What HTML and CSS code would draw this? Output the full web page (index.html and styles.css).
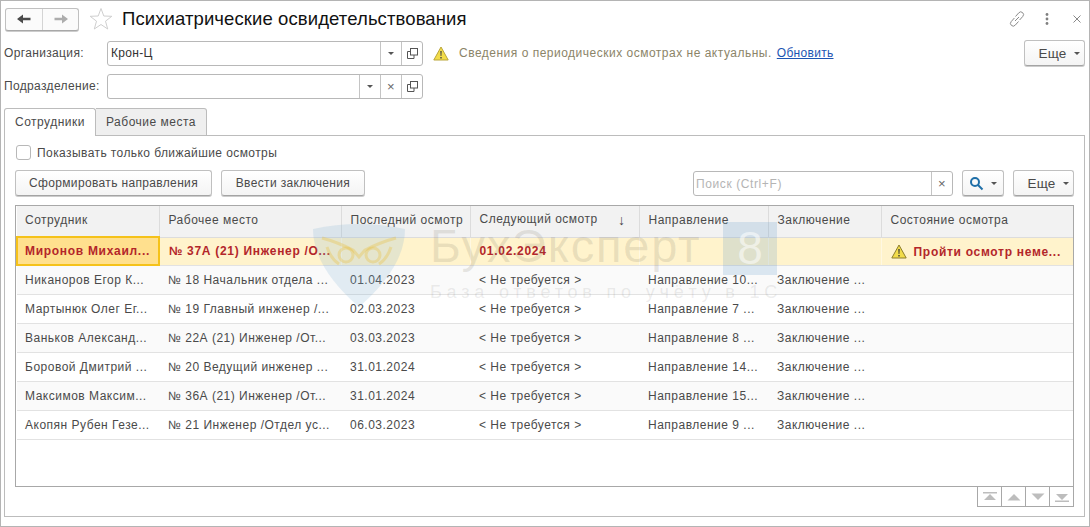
FILE: index.html
```html
<!DOCTYPE html>
<html lang="ru">

<head>
    <meta charset="UTF-8">
    <meta name="viewport" content="width=device-width, initial-scale=1.0">
    <title>Психиатрические освидетельствования</title>
    <link rel="stylesheet" href="styles.css">
</head>

<body>
    <div class="window">
        <header class="title-bar">
            <div class="nav-group">
                <button class="nav-btn">
                    <svg width="16" height="12" viewBox="0 0 16 12"><path d="M1 6 L7 1.5 V4.8 H14.5 V7.2 H7 V10.5 Z" fill="#4a4a4a"/></svg>
                </button>
                <button class="nav-btn">
                    <svg width="16" height="12" viewBox="0 0 16 12"><path d="M15 6 L9 1.5 V4.8 H1.5 V7.2 H9 V10.5 Z" fill="#adadad"/></svg>
                </button>
            </div>
            <svg class="star" width="24" height="24" viewBox="0 0 24 24"><path d="M12 1.5 L14.8 9 L22.8 9.3 L16.5 14.2 L18.7 22 L12 17.5 L5.3 22 L7.5 14.2 L1.2 9.3 L9.2 9 Z" fill="#fff" stroke="#cfcfcf"/></svg>
            <h1 class="title">Психиатрические освидетельствования</h1>
            <div class="title-tools">
                <svg class="tool-link" width="18" height="18" viewBox="0 0 18 18" fill="none" stroke="#8a8a8a" stroke-width="1"><path d="M7.5 6.5 L10.8 2.8 a2.6 2.6 0 0 1 4 3.6 L11.6 10"/><path d="M10.5 11.5 L7.2 15.2 a2.6 2.6 0 0 1 -4 -3.6 L6.4 8"/><path d="M7 11 L11 7"/></svg>
                <svg width="6" height="14" viewBox="0 0 6 14"><circle cx="3" cy="2.5" r="1.4" fill="#808080"/><circle cx="3" cy="7" r="1.4" fill="#808080"/><circle cx="3" cy="11.5" r="1.4" fill="#808080"/></svg>
                <svg width="10" height="10" viewBox="0 0 10 10"><path d="M1.5 1.5 L8.5 8.5 M8.5 1.5 L1.5 8.5" stroke="#888" stroke-width="1"/></svg>
            </div>
        </header>

        <div class="form-row form-row-first">
            <label class="field-label">Организация:</label>
            <div class="field">
                <div class="field-value">Крон-Ц</div>
                <span class="field-btn"><i class="caret"></i></span>
                <span class="field-btn">
                    <svg width="11" height="11" viewBox="0 0 11 11" fill="none" stroke="#555"><rect x="3.5" y="0.5" width="7" height="6.5"/><path d="M3.5 3.5 H0.5 V10.5 H7 V7"/></svg>
                </span>
            </div>
            <svg class="warn" width="16" height="15" viewBox="0 0 16 15"><path d="M8 1 L15.2 14 H0.8 Z" fill="#f2dc4a" stroke="#b9a53a"/><path d="M7.3 5 H8.7 L8.4 10 H7.6 Z M7.3 11 H8.7 V12.4 H7.3 Z" fill="#444"/></svg>
            <span class="notice">Сведения о периодических осмотрах не актуальны.</span>
            <a class="link" href="#">Обновить</a>
            <button class="btn btn-more-top">Еще<i class="caret"></i></button>
        </div>

        <div class="form-row form-row-second">
            <label class="field-label">Подразделение:</label>
            <div class="field">
                <div class="field-value"></div>
                <span class="field-btn"><i class="caret"></i></span>
                <span class="field-btn cross">×</span>
                <span class="field-btn">
                    <svg width="11" height="11" viewBox="0 0 11 11" fill="none" stroke="#555"><rect x="3.5" y="0.5" width="7" height="6.5"/><path d="M3.5 3.5 H0.5 V10.5 H7 V7"/></svg>
                </span>
            </div>
        </div>

        <div class="tabs">
            <div class="tab tab-active">Сотрудники</div>
            <div class="tab">Рабочие места</div>
        </div>

        <section class="panel">
            <div class="check-row">
                <span class="checkbox"></span>
                <span>Показывать только ближайшие осмотры</span>
            </div>

            <div class="toolbar">
                <button class="btn btn-make">Сформировать направления</button>
                <button class="btn btn-enter">Ввести заключения</button>
                <div class="search">
                    <div class="search-input">Поиск (Ctrl+F)</div>
                    <span class="field-btn cross">×</span>
                </div>
                <button class="btn btn-find">
                    <svg width="15" height="15" viewBox="0 0 15 15" fill="none" stroke="#1f6fa8" stroke-width="2"><circle cx="6" cy="6" r="4"/><path d="M9 9 L13.5 13.5"/></svg>
                    <i class="caret"></i>
                </button>
                <button class="btn btn-more">Еще<i class="caret"></i></button>
            </div>

            <div class="grid-wrap">
                <table class="grid">
                    <colgroup>
                        <col class="col-1"><col class="col-2"><col class="col-3"><col class="col-4">
                        <col class="col-5"><col class="col-6"><col class="col-7">
                    </colgroup>
                    <thead>
                        <tr>
                            <th>Сотрудник</th>
                            <th>Рабочее место</th>
                            <th>Последний осмотр</th>
                            <th class="sorted">Следующий осмотр<span class="sort-arrow">↓</span></th>
                            <th>Направление</th>
                            <th>Заключение</th>
                            <th>Состояние осмотра</th>
                        </tr>
                    </thead>
                    <tbody>
                        <tr class="row-alert">
                            <td class="cell-current">Миронов Михаил...</td>
                            <td>№ 37А (21) Инженер /О...</td>
                            <td></td>
                            <td>01.02.2024</td>
                            <td></td>
                            <td></td>
                            <td class="cell-state">
                                <svg width="16" height="15" viewBox="0 0 16 15"><path d="M8 1 L15.2 14 H0.8 Z" fill="#f2dc4a" stroke="#8c7d2c"/><path d="M7.3 5 H8.7 L8.4 10 H7.6 Z M7.3 11 H8.7 V12.4 H7.3 Z" fill="#333"/></svg>
                                Пройти осмотр неме...
                            </td>
                        </tr>
                        <tr>
                            <td>Никаноров Егор К...</td>
                            <td>№ 18 Начальник отдела ...</td>
                            <td>01.04.2023</td>
                            <td>&lt; Не требуется &gt;</td>
                            <td>Направление 10...</td>
                            <td>Заключение ...</td>
                            <td></td>
                        </tr>
                        <tr>
                            <td>Мартынюк Олег Ег...</td>
                            <td>№ 19 Главный инженер /...</td>
                            <td>02.03.2023</td>
                            <td>&lt; Не требуется &gt;</td>
                            <td>Направление 7 ...</td>
                            <td>Заключение ...</td>
                            <td></td>
                        </tr>
                        <tr>
                            <td>Ваньков Александ...</td>
                            <td>№ 22А (21) Инженер /От...</td>
                            <td>03.03.2023</td>
                            <td>&lt; Не требуется &gt;</td>
                            <td>Направление 8 ...</td>
                            <td>Заключение ...</td>
                            <td></td>
                        </tr>
                        <tr>
                            <td>Боровой Дмитрий ...</td>
                            <td>№ 20 Ведущий инженер ...</td>
                            <td>31.01.2024</td>
                            <td>&lt; Не требуется &gt;</td>
                            <td>Направление 14...</td>
                            <td>Заключение ...</td>
                            <td></td>
                        </tr>
                        <tr>
                            <td>Максимов Максим...</td>
                            <td>№ 36А (21) Инженер /От...</td>
                            <td>31.01.2024</td>
                            <td>&lt; Не требуется &gt;</td>
                            <td>Направление 15...</td>
                            <td>Заключение ...</td>
                            <td></td>
                        </tr>
                        <tr>
                            <td>Акопян Рубен Гезе...</td>
                            <td>№ 21 Инженер /Отдел ус...</td>
                            <td>06.03.2023</td>
                            <td>&lt; Не требуется &gt;</td>
                            <td>Направление 9 ...</td>
                            <td>Заключение ...</td>
                            <td></td>
                        </tr>
                    </tbody>
                </table>
            </div>

            <div class="pager">
                <span class="pager-btn"><svg width="14" height="10" viewBox="0 0 14 10"><path d="M0 0 H14 V1.5 H0 Z M7 2 L13 8 H1 Z" fill="#bdbdbd"/></svg></span>
                <span class="pager-btn"><svg width="14" height="8" viewBox="0 0 14 8"><path d="M7 1 L13.5 7.5 H0.5 Z" fill="#bdbdbd"/></svg></span>
                <span class="pager-btn"><svg width="14" height="8" viewBox="0 0 14 8"><path d="M0.5 0.5 H13.5 L7 7 Z" fill="#bdbdbd"/></svg></span>
                <span class="pager-btn"><svg width="14" height="10" viewBox="0 0 14 10"><path d="M1 2 H13 L7 8 Z M0 8.5 H14 V10 H0 Z" fill="#bdbdbd"/></svg></span>
            </div>
        </section>

        <!-- watermark over the grid -->
        <div class="watermark">
            <svg class="wm-shield" width="93" height="84" viewBox="0 0 93 84">
                <path d="M0 6 Q46 -4 92 6 Q92 44 46 84 Q0 44 0 6 Z" fill="#7fb0d4" fill-opacity="0.2"/>
                <g fill="none" stroke="#e8b820" stroke-opacity="0.28" stroke-width="3">
                    <circle cx="33" cy="32" r="7"/>
                    <circle cx="60" cy="32" r="7"/>
                    <path d="M9 15 Q24 19 40 27 L46 34 L52 27 Q68 19 83 15"/>
                    <path d="M14 24 Q18 36 26 41 M78 24 Q74 36 66 41"/>
                </g>
            </svg>
            <div class="wm-text">
                <div class="wm-name">БухЭксперт</div>
                <div class="wm-sub">База ответов по учёту в 1С</div>
            </div>
            <div class="wm-eight">8</div>
        </div>
    </div>
</body>

</html>
```

FILE: styles.css
```css
* {
    box-sizing: border-box;
}

html,
body {
    margin: 0;
    height: 100%;
    background: #fff;
}

body {
    font-family: "Liberation Sans", Arial, sans-serif;
    font-size: 12px;
    letter-spacing: 0.5px;
    color: #4a4a4a;
}

.window {
    position: relative;
    height: 527px;
    border: 1px solid #b4b4b4;
    overflow: hidden;
}

/* title */
.title-bar {
    display: flex;
    align-items: center;
    height: 36px;
    padding: 0 7px 0 4px;
}

.nav-group {
    display: flex;
    height: 23px;
    border: 1px solid #c0c0c0;
    border-bottom-color: #a8a8a8;
    border-radius: 3px;
    box-shadow: 0 1px 0 #ccc;
    background: #fbfbfb;
}

.nav-btn {
    display: flex;
    align-items: center;
    justify-content: center;
    width: 36px;
    padding: 0;
    border: 0;
    background: none;
}

.nav-btn + .nav-btn {
    border-left: 1px solid #d4d4d4;
}

.star {
    margin-left: 10px;
}

.title {
    margin: 0 0 0 9px;
    font-size: 18.5px;
    font-weight: normal;
    letter-spacing: 0.1px;
    color: #111;
}

.title-tools {
    display: flex;
    align-items: center;
    gap: 22px;
    margin-left: auto;
}

.tool-link {
    margin-right: -4px;
}

/* form */
.form-row {
    display: flex;
    align-items: center;
    padding-left: 3px;
}

.form-row-first {
    height: 26px;
    margin-top: 3px;
}

.form-row-second {
    height: 24px;
    margin-top: 8px;
}

.field-label {
    width: 103px;
    letter-spacing: 0.35px;
}

.field {
    display: flex;
    width: 316px;
    height: 25px;
    border: 1px solid #b8b8b8;
    border-radius: 3px;
    background: #fff;
}

.field-value {
    flex: 1;
    padding: 4px 3px;
    letter-spacing: 0.3px;
    color: #333;
}

.field-btn {
    display: flex;
    align-items: center;
    justify-content: center;
    width: 21px;
    border-left: 1px solid #c4c4c4;
    color: #666;
}

.cross {
    font-size: 13px;
}

.caret {
    display: inline-block;
    width: 0;
    height: 0;
    border-left: 3px solid transparent;
    border-right: 3px solid transparent;
    border-top: 3px solid #555;
}

.warn {
    margin-left: 10px;
}

.notice {
    margin-left: 10px;
    color: #8b8468;
}

.link {
    margin-left: 5px;
    letter-spacing: 0.3px;
    color: #1c55b3;
}

.btn {
    height: 26px;
    padding: 0;
    border: 1px solid #c0c0c0;
    border-bottom-color: #a4a4a4;
    border-radius: 3px;
    background: linear-gradient(#fff, #f4f4f4);
    box-shadow: 0 1px 0 #ccc;
    font-family: inherit;
    font-size: 12px;
    letter-spacing: 0.35px;
    color: #4a4a4a;
}

.btn .caret {
    margin-left: 7px;
    vertical-align: middle;
}

.btn-more-top,
.btn-more {
    padding-left: 9px;
    font-size: 13.5px;
    letter-spacing: 0.2px;
}

.btn-more-top {
    width: 61px;
    margin-left: auto;
    margin-right: 4px;
}

/* tabs */
.tabs {
    display: flex;
    height: 28px;
    margin: 10px 0 0 3px;
}

.tab {
    width: 111px;
    padding-top: 6px;
    text-align: center;
    border: 1px solid #bcbcbc;
    border-left: 0;
    border-radius: 0 3px 0 0;
    background: #efefef;
}

.tab-active {
    position: relative;
    z-index: 1;
    width: 92px;
    height: 28px;
    border-left: 1px solid #bcbcbc;
    border-bottom: 0;
    border-radius: 3px 3px 0 0;
    background: #fff;
}

.panel {
    display: flex;
    flex-direction: column;
    height: 382px;
    margin: -1px 4px 0 3px;
    padding: 9px 10px 0 10px;
    border: 1px solid #bcbcbc;
}

.check-row {
    display: flex;
    align-items: center;
    gap: 6px;
    height: 15px;
    letter-spacing: 0.42px;
}

.checkbox {
    width: 15px;
    height: 15px;
    margin-left: 1px;
    border: 1px solid #b8b8b8;
    border-radius: 3px;
}

.toolbar {
    display: flex;
    align-items: center;
    height: 26px;
    margin-top: 10px;
}

.btn-make {
    width: 197px;
}

.btn-enter {
    width: 144px;
    margin-left: 9px;
}

.search {
    display: flex;
    width: 260px;
    height: 25px;
    margin-left: auto;
    border: 1px solid #b8b8b8;
    border-radius: 3px;
}

.search-input {
    flex: 1;
    padding: 5px 2px;
    letter-spacing: 0.6px;
    color: #b4b4b4;
}

.btn-find {
    display: flex;
    align-items: center;
    justify-content: center;
    width: 42px;
    margin-left: 9px;
}

.btn-more {
    width: 61px;
    margin-left: 9px;
}

/* grid */
.grid-wrap {
    height: 282px;
    margin-top: 9px;
    border: 1px solid #a8a8a8;
    overflow: hidden;
}

.grid {
    width: 100%;
    table-layout: fixed;
    border-collapse: collapse;
}

.col-1 { width: 142px; }
.col-2 { width: 182px; }
.col-3 { width: 129px; }
.col-4 { width: 169px; }
.col-5 { width: 129px; }
.col-6 { width: 113px; }

.grid th {
    height: 31px;
    padding: 0 8px 2px 9px;
    font-weight: normal;
    text-align: left;
    white-space: nowrap;
    background: #f2f2f2;
    border-right: 1px solid #dcdcdc;
    border-bottom: 1px solid #dcdcdc;
}

.grid th:first-child,
.grid td:first-child {
    padding-left: 8px;
}

.grid th:last-child {
    border-right: 0;
}

.sort-arrow {
    float: right;
    margin-right: 5px;
    font-size: 14px;
    color: #444;
}

.grid td {
    height: 29px;
    padding: 0 8px 0 9px;
    white-space: nowrap;
    overflow: hidden;
    border-bottom: 1px solid #e2e2e2;
}

.grid tbody tr:nth-child(even) {
    background: #fafafa;
}

.grid .row-alert td {
    height: 28px;
    font-weight: bold;
    letter-spacing: 0.7px;
    color: #b3262a;
    background: #fff3cc;
    border-right: 1px solid #fff8e2;
}

.grid .row-alert td:last-child {
    border-right: 0;
}

.grid .row-alert .cell-current {
    background: #ffe08e;
    border: 2px solid #f5c21a;
    padding-left: 7px;
}

.grid .cell-state svg {
    vertical-align: -3px;
    margin-right: 3px;
}

.pager {
    display: flex;
    align-self: flex-end;
    width: 97px;
    height: 21px;
    margin-top: -1px;
    border: 1px solid #a8a8a8;
}

.pager-btn {
    display: flex;
    flex: 1;
    align-items: center;
    justify-content: center;
    border-left: 1px solid #a8a8a8;
}

.pager-btn:first-child {
    border-left: 0;
}

/* watermark */
.watermark {
    position: absolute;
    left: 312px;
    top: 221px;
    display: flex;
    pointer-events: none;
}

.wm-shield {
    margin-top: 1px;
}

.wm-text {
    margin-left: 24px;
}

.wm-name {
    font-size: 47px;
    line-height: 48px;
    letter-spacing: 1.8px;
    color: rgba(120, 110, 90, 0.16);
}

.wm-sub {
    margin-top: 12px;
    font-size: 18px;
    letter-spacing: 4.8px;
    white-space: nowrap;
    color: rgba(120, 120, 120, 0.14);
}

.wm-eight {
    position: absolute;
    left: 410px;
    top: 0;
    width: 54px;
    height: 53px;
    text-align: center;
    font-size: 46px;
    line-height: 53px;
    letter-spacing: 0;
    color: rgba(255, 255, 255, 0.55);
    background: rgba(90, 150, 200, 0.2);
}
```
